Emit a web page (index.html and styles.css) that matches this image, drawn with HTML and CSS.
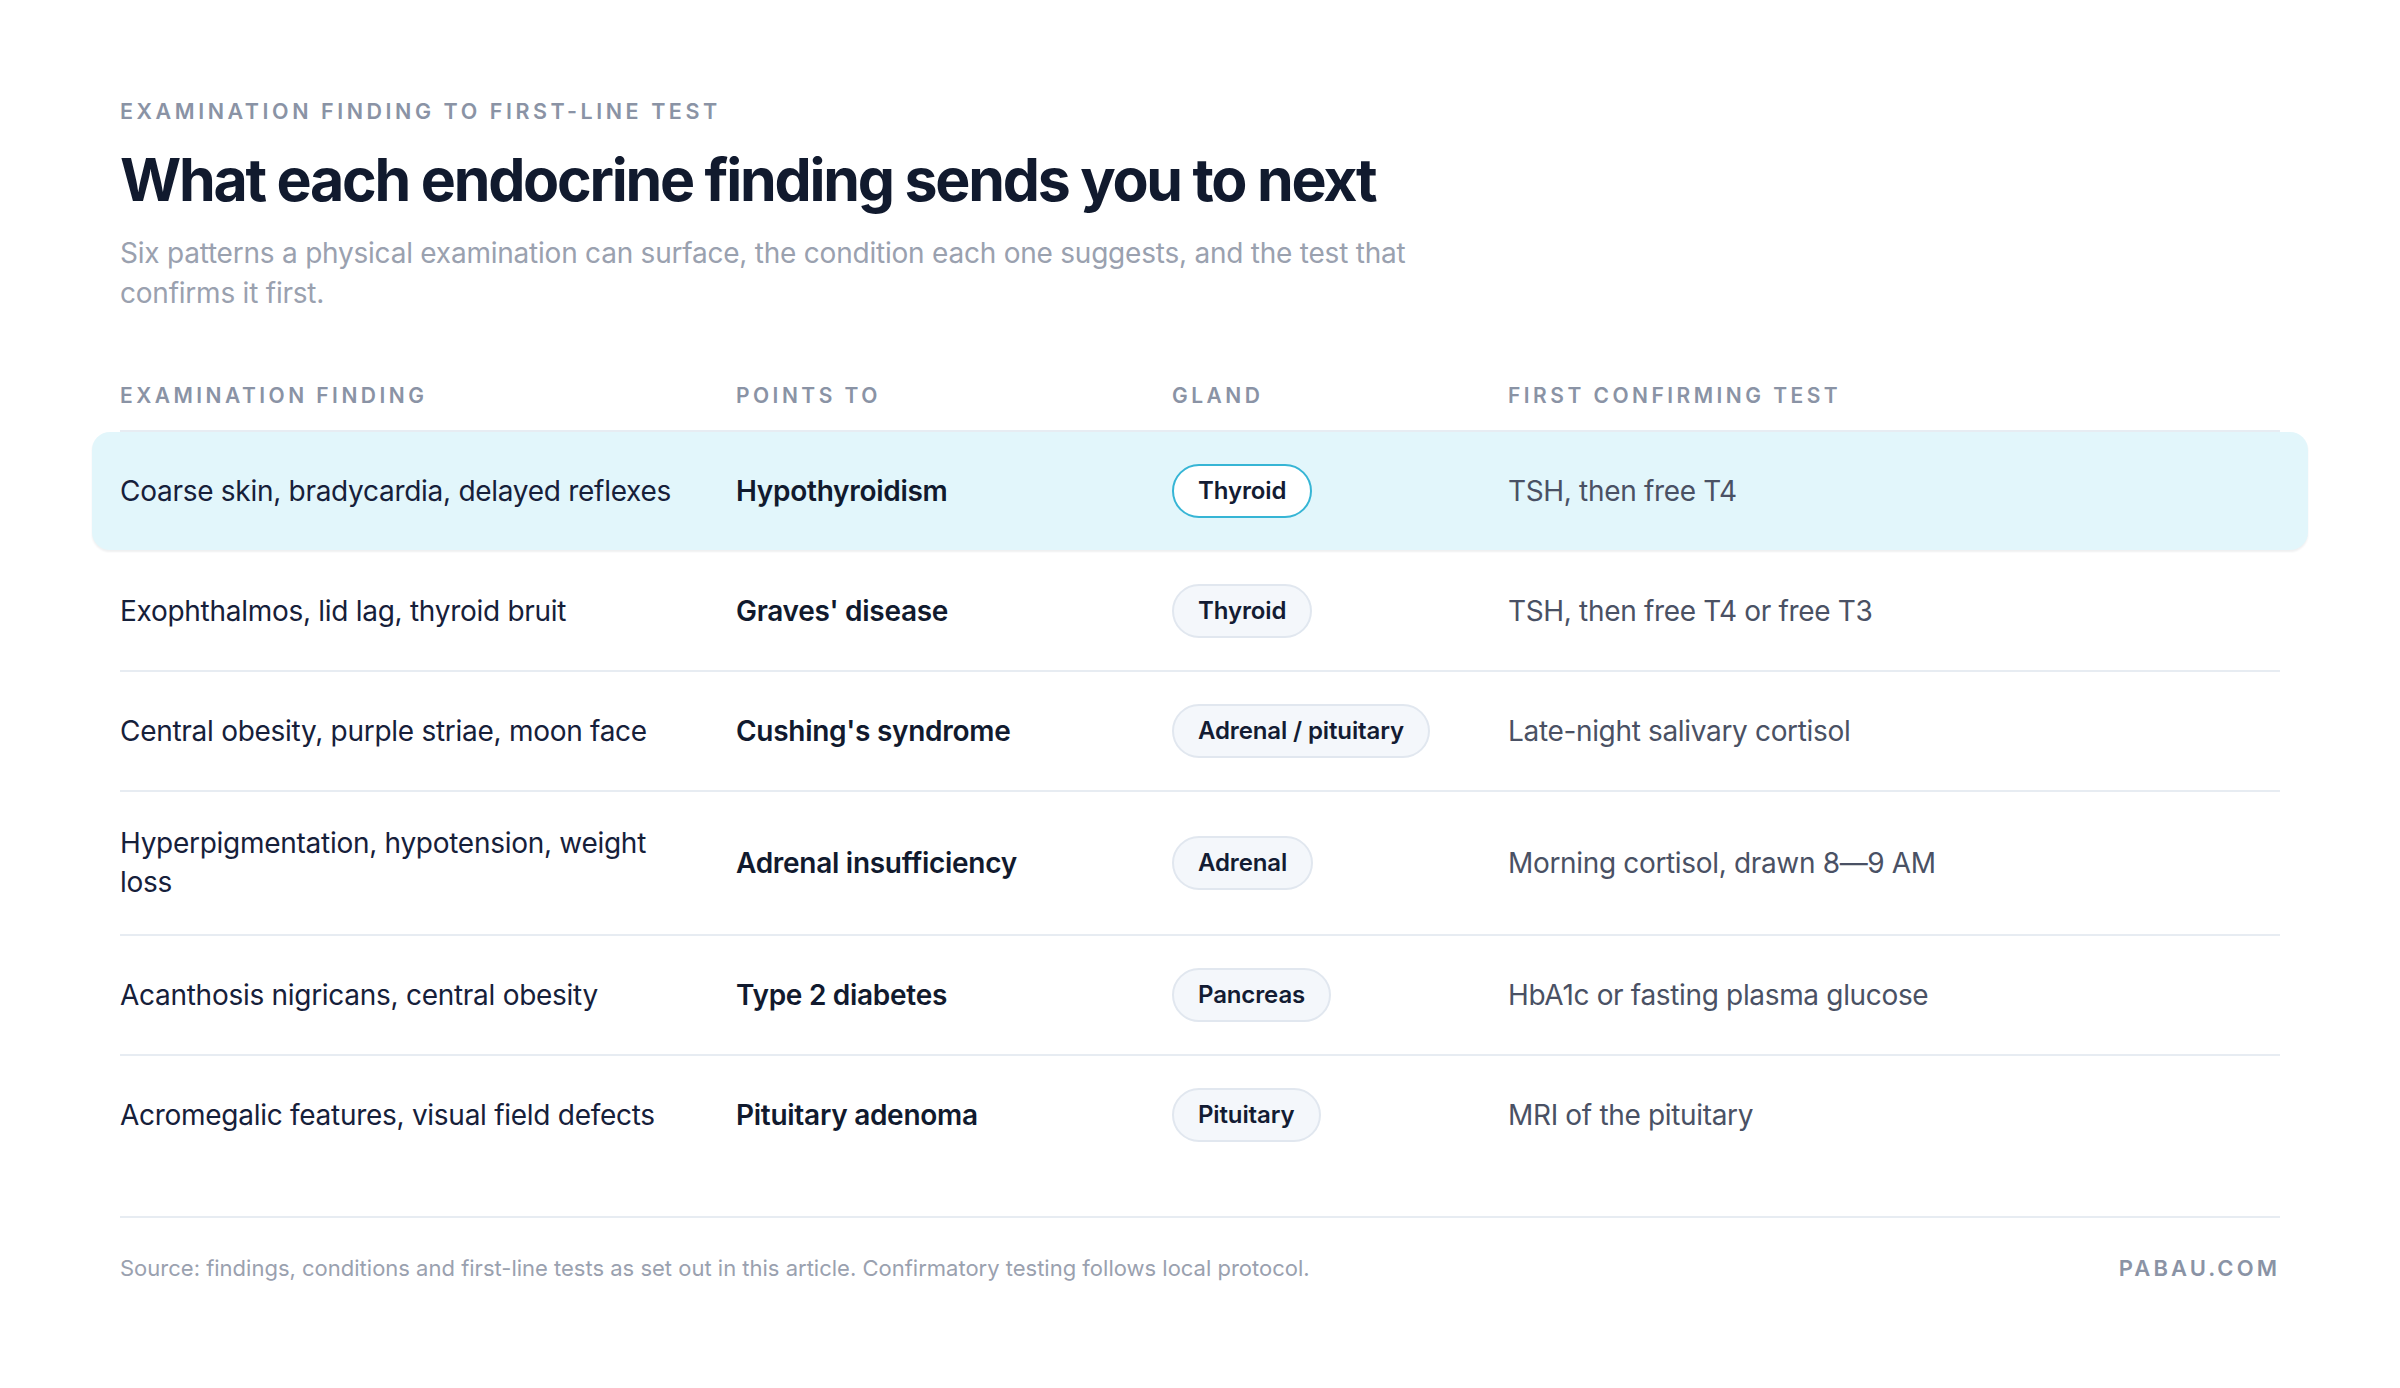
FILE: index.html
```html
<!DOCTYPE html>
<html lang="en">
<head>
    <meta charset="UTF-8">
    <meta name="viewport" content="width=device-width, initial-scale=1.0">
    <title>Examination finding to first-line test</title>
    <link rel="stylesheet" href="styles.css">
</head>
<body>
    <div class="page">
        <p class="eyebrow">Examination finding to first-line test</p>
        <h1>What each endocrine finding sends you to next</h1>
        <p class="lead">Six patterns a physical examination can surface, the condition each one suggests, and the test that confirms it first.</p>

        <div class="table">
            <div class="row head">
                <div>Examination finding</div>
                <div>Points to</div>
                <div>Gland</div>
                <div>First confirming test</div>
            </div>
            <div class="row active">
                <div class="finding">Coarse skin, bradycardia, delayed reflexes</div>
                <div class="condition">Hypothyroidism</div>
                <div><span class="pill">Thyroid</span></div>
                <div class="test">TSH, then free T4</div>
            </div>
            <div class="row">
                <div class="finding">Exophthalmos, lid lag, thyroid bruit</div>
                <div class="condition">Graves' disease</div>
                <div><span class="pill">Thyroid</span></div>
                <div class="test">TSH, then free T4 or free T3</div>
            </div>
            <div class="row">
                <div class="finding">Central obesity, purple striae, moon face</div>
                <div class="condition">Cushing's syndrome</div>
                <div><span class="pill">Adrenal / pituitary</span></div>
                <div class="test">Late-night salivary cortisol</div>
            </div>
            <div class="row">
                <div class="finding">Hyperpigmentation, hypotension, weight loss</div>
                <div class="condition">Adrenal insufficiency</div>
                <div><span class="pill">Adrenal</span></div>
                <div class="test">Morning cortisol, drawn 8—9 AM</div>
            </div>
            <div class="row">
                <div class="finding">Acanthosis nigricans, central obesity</div>
                <div class="condition">Type 2 diabetes</div>
                <div><span class="pill">Pancreas</span></div>
                <div class="test">HbA1c or fasting plasma glucose</div>
            </div>
            <div class="row">
                <div class="finding">Acromegalic features, visual field defects</div>
                <div class="condition">Pituitary adenoma</div>
                <div><span class="pill">Pituitary</span></div>
                <div class="test">MRI of the pituitary</div>
            </div>
        </div>

        <div class="footer">
            <p class="source">Source: findings, conditions and first-line tests as set out in this article. Confirmatory testing follows local protocol.</p>
            <p class="brand">pabau.com</p>
        </div>
    </div>
</body>
</html>
```

FILE: styles.css
```css
body {
    margin: 0;
    background: #ffffff;
    font-family: Inter, "Noto Sans", sans-serif;
    color: #131c33;
}
.page {
    padding: 97px 120px 0;
}
p {
    margin: 0;
}
.eyebrow {
    font-size: 21.5px;
    line-height: 28px;
    font-weight: 600;
    letter-spacing: 0.165em;
    text-transform: uppercase;
    color: #8a93a5;
}
h1 {
    margin: 19px 0 0;
    font-size: 59px;
    line-height: 72px;
    font-weight: 700;
    letter-spacing: -0.038em;
    color: #111a2e;
}
.lead {
    margin-top: 17px;
    max-width: 1360px;
    font-size: 28px;
    line-height: 40px;
    letter-spacing: -0.008em;
    color: #9aa1af;
}
.table {
    margin-top: 71px;
}
.row {
    display: grid;
    grid-template-columns: 616px 436px 336px 1fr;
    align-items: center;
    padding: 32px 0;
    border-bottom: 2px solid #e7ecf2;
}
.row:last-child {
    border-bottom: none;
}
.row.head {
    padding: 0 0 22px;
    font-size: 21px;
    line-height: 24px;
    font-weight: 600;
    letter-spacing: 0.165em;
    text-transform: uppercase;
    color: #8a93a5;
}
.row.active {
    margin: 0 -28px 2px;
    padding: 32px 28px;
    background: #e2f6fb;
    border-radius: 18px;
    border-bottom: none;
    box-shadow: 0 2px 2px rgba(30, 41, 59, 0.07);
}
.finding {
    padding-right: 40px;
    font-size: 28px;
    line-height: 39px;
    letter-spacing: -0.01em;
    color: #16203a;
}
.condition {
    font-size: 28px;
    line-height: 39px;
    font-weight: 600;
    letter-spacing: -0.01em;
    color: #111a2e;
}
.test {
    font-size: 28px;
    line-height: 39px;
    letter-spacing: -0.012em;
    color: #4a5164;
}
.pill {
    display: inline-block;
    box-sizing: border-box;
    height: 54px;
    padding: 0 24px;
    border: 2px solid #e1e7ef;
    border-radius: 27px;
    background: #f4f7fb;
    font-size: 24px;
    line-height: 50px;
    font-weight: 600;
    letter-spacing: -0.005em;
    color: #131c33;
}
.active .pill {
    background: #ffffff;
    border-color: #36b5d5;
}
.footer {
    display: flex;
    justify-content: space-between;
    align-items: center;
    margin-top: 42px;
    padding-top: 36px;
    border-top: 2px solid #e7ecf2;
}
.source {
    font-size: 22px;
    line-height: 28px;
    color: #9aa1af;
}
.brand {
    font-size: 22px;
    line-height: 28px;
    font-weight: 600;
    letter-spacing: 0.14em;
    text-transform: uppercase;
    color: #8a93a5;
}
```
